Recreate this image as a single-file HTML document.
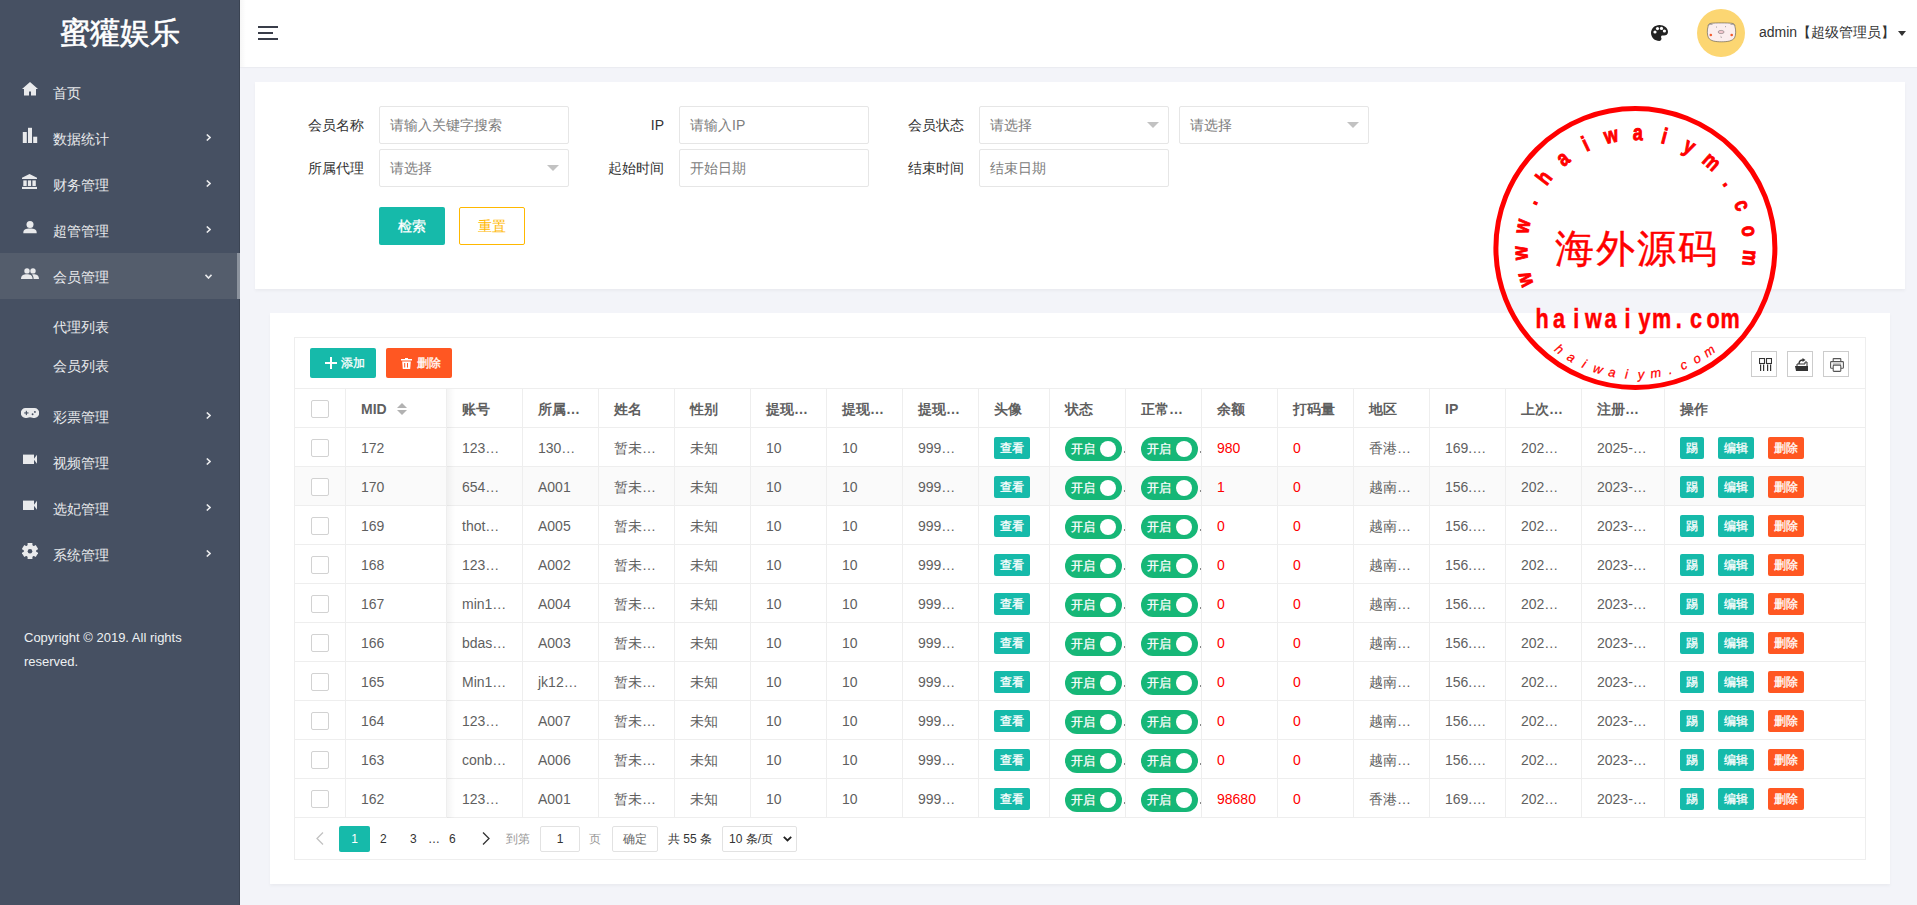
<!DOCTYPE html><html><head><meta charset="utf-8"><title>admin</title><style>
*{margin:0;padding:0;box-sizing:border-box}
html,body{width:1917px;height:905px;overflow:hidden}
body{position:relative;background:#f3f4f9;font-family:"Liberation Sans",sans-serif;font-size:14px;color:#333}
.abs{position:absolute}
.side{position:absolute;left:0;top:0;width:240px;height:905px;background:#465062}
.side .edge{position:absolute;left:239px;top:0;width:1px;height:905px;background:#3b4453}
.logo{position:absolute;left:0;top:12px;width:240px;text-align:center;color:#fff;font-size:30px;line-height:42px;-webkit-text-stroke:0.6px #fff}
.mi{position:absolute;left:0;width:240px;height:46px;color:#e9eaec;font-size:14px}
.mi .t{position:absolute;left:53px;top:1px;line-height:46px}
.mi svg{position:absolute}
.mi .ar{position:absolute;left:206px;top:19px}
.mi.act{background:#545d6c}
.mi.act .bar{position:absolute;right:0;top:0;width:3px;height:46px;background:#8c939e}
.copy{position:absolute;left:24px;top:626px;color:#eef0f2;font-size:13px;line-height:24px}
.hdr{position:absolute;left:240px;top:0;width:1677px;height:67px;background:#fff;box-shadow:0 1px 1px rgba(0,0,0,.03)}
.card{position:absolute;background:#fff;box-shadow:0 2px 3px rgba(0,0,0,.04)}
.lbl{position:absolute;width:110px;text-align:right;padding-right:15px;line-height:38px;color:#333;font-size:14px}
.inp{position:absolute;width:190px;height:38px;border:1px solid #e6e6e6;border-radius:2px;background:#fff;color:#7d7d7d;padding-left:10px;line-height:36px;font-size:14px}
.inp .edge{position:absolute;right:9px;top:15px;width:0;height:0;border-left:6px solid transparent;border-right:6px solid transparent;border-top:6px solid #c2c2c2}
.btn{position:absolute;height:38px;line-height:38px;text-align:center;border-radius:2px;font-size:14px;color:#fff;-webkit-text-stroke-width:0.3px}
.tbox{position:absolute;left:294px;top:337px;width:1572px;height:523px;border:1px solid #eee;background:#fff}
.row{position:absolute;left:0;width:1570px;height:39px;border-bottom:1px solid #eee}
.cell{position:absolute;top:0;height:38px;border-left:1px solid #eee;line-height:40px;padding-left:15px;color:#5f5f5f;font-size:14px;white-space:nowrap;overflow:hidden}
.hrow .cell{font-weight:bold}
.cb{position:absolute;width:18px;height:18px;border:1px solid #d2d2d2;border-radius:2px;background:#fff}
.xs{position:absolute;top:9px;height:22px;line-height:22px;border-radius:2px;color:#fff;font-size:12px;text-align:center;-webkit-text-stroke:0.3px #fff}
.sw{position:absolute;top:9px;width:57px;height:24px;border-radius:12px;background:#16b777;color:#fff;font-size:12px;line-height:24px}
.sw span{position:absolute;left:6px;top:0;-webkit-text-stroke:0.3px #fff}
.sw i{position:absolute;right:6px;top:4px;width:16px;height:16px;border-radius:50%;background:#fff}
.red{color:#ff0000 !important}
.tool{position:absolute;width:26px;height:26px;border:1px solid #ccc;top:13px}
.pg{position:absolute;top:8px;height:26px;line-height:26px;font-size:12px;color:#333}
</style></head><body><div class="side"><div class="edge"></div><div class="logo">蜜獾娱乐</div><div class="mi" style="top:69px"><svg style="left:22px;top:13px" width="16" height="14" viewBox="0 0 16 14"><path d="M8 0 L16 7 L14 7 L14 13.5 L9 13.5 L9 9.5 L7 9.5 L7 13.5 L2 13.5 L2 7 L0 7 Z" fill="#e9eaec"/></svg><span class="t">首页</span></div><div class="mi" style="top:115px"><svg style="left:22px;top:12px" width="16" height="16" viewBox="0 0 16 16"><rect x="0.8" y="5" width="4" height="11" fill="#e9eaec"/><rect x="6" y="0.8" width="4" height="15.2" fill="#e9eaec"/><rect x="11.2" y="9.7" width="4" height="6.3" fill="#e9eaec"/></svg><span class="t">数据统计</span><svg class="ar" width="5" height="7" viewBox="0 0 5 7"><path d="M0.8 0.5 L4 3.5 L0.8 6.5" stroke="#e9eaec" stroke-width="1.6" fill="none"/></svg></div><div class="mi" style="top:161px"><svg style="left:22px;top:12px" width="16" height="16" viewBox="0 0 16 16"><path d="M7.5 1 L15 4.8 L15 6.1 L0 6.1 L0 4.8 Z" fill="#e9eaec"/><rect x="1.3" y="7.4" width="3.4" height="5.6" fill="#e9eaec"/><rect x="5.9" y="7.4" width="3.2" height="5.6" fill="#e9eaec"/><rect x="10.4" y="7.4" width="3.4" height="5.6" fill="#e9eaec"/><rect x="0" y="13.9" width="15" height="3" fill="#e9eaec"/></svg><span class="t">财务管理</span><svg class="ar" width="5" height="7" viewBox="0 0 5 7"><path d="M0.8 0.5 L4 3.5 L0.8 6.5" stroke="#e9eaec" stroke-width="1.6" fill="none"/></svg></div><div class="mi" style="top:207px"><svg style="left:23px;top:14px" width="14" height="13" viewBox="0 0 14 13"><circle cx="7" cy="3.6" r="3.5" fill="#e9eaec"/><path d="M0.3 12.2 C0.3 8.6 2.5 7.6 7 7.6 C11.5 7.6 13.7 8.6 13.7 12.2 Z" fill="#e9eaec"/></svg><span class="t">超管管理</span><svg class="ar" width="5" height="7" viewBox="0 0 5 7"><path d="M0.8 0.5 L4 3.5 L0.8 6.5" stroke="#e9eaec" stroke-width="1.6" fill="none"/></svg></div><div class="mi act" style="top:253px"><svg style="left:21px;top:15px" width="18" height="11" viewBox="0 0 18 11"><circle cx="6" cy="2.9" r="2.7" fill="#e9eaec"/><circle cx="12" cy="2.9" r="2.7" fill="#e9eaec"/><path d="M0 11 C0 7.3 2.5 6.3 6 6.3 C9 6.3 11.3 7 11.6 11 Z" fill="#e9eaec"/><path d="M11 6.5 C11.5 6.3 12 6.3 12.5 6.3 C15.5 6.3 18 7.3 18 11 L12.6 11 C12.5 9 12.2 7.6 11 6.5 Z" fill="#e9eaec"/></svg><span class="t">会员管理</span><svg class="ar" style="left:205px;top:21px" width="7" height="5" viewBox="0 0 7 5"><path d="M0.5 0.8 L3.5 4 L6.5 0.8" stroke="#e9eaec" stroke-width="1.6" fill="none"/></svg><div class="bar"></div></div><div class="mi" style="top:393px"><svg style="left:21px;top:15px" width="18" height="10" viewBox="0 0 18 10"><path d="M4.5 0 L13.5 0 A4.5 4.8 0 0 1 13.5 10 C11.8 10 11 9.2 9 9.2 C7 9.2 6.2 10 4.5 10 A4.5 4.8 0 0 1 4.5 0 Z" fill="#e9eaec"/><rect x="3.2" y="4.4" width="4.3" height="1.1" fill="#465062"/><rect x="4.8" y="2.8" width="1.1" height="4.3" fill="#465062"/><circle cx="11.6" cy="6.3" r="0.95" fill="#465062"/><circle cx="13.9" cy="3.9" r="0.95" fill="#465062"/></svg><span class="t">彩票管理</span><svg class="ar" width="5" height="7" viewBox="0 0 5 7"><path d="M0.8 0.5 L4 3.5 L0.8 6.5" stroke="#e9eaec" stroke-width="1.6" fill="none"/></svg></div><div class="mi" style="top:439px"><svg style="left:23px;top:15px" width="15" height="11" viewBox="0 0 15 11"><rect x="0" y="0.6" width="11" height="9.4" fill="#e9eaec"/><path d="M10.6 5.3 L14 0.8 L14 9.8 Z" fill="#e9eaec"/></svg><span class="t">视频管理</span><svg class="ar" width="5" height="7" viewBox="0 0 5 7"><path d="M0.8 0.5 L4 3.5 L0.8 6.5" stroke="#e9eaec" stroke-width="1.6" fill="none"/></svg></div><div class="mi" style="top:485px"><svg style="left:23px;top:15px" width="15" height="11" viewBox="0 0 15 11"><rect x="0" y="0.6" width="11" height="9.4" fill="#e9eaec"/><path d="M10.6 5.3 L14 0.8 L14 9.8 Z" fill="#e9eaec"/></svg><span class="t">选妃管理</span><svg class="ar" width="5" height="7" viewBox="0 0 5 7"><path d="M0.8 0.5 L4 3.5 L0.8 6.5" stroke="#e9eaec" stroke-width="1.6" fill="none"/></svg></div><div class="mi" style="top:531px"><svg style="left:22px;top:12px" width="16" height="16" viewBox="0 0 16 16"><rect x="5.6" y="0" width="4.8" height="16" fill="#e9eaec" transform="rotate(0 8 8)"/><rect x="5.6" y="0" width="4.8" height="16" fill="#e9eaec" transform="rotate(60 8 8)"/><rect x="5.6" y="0" width="4.8" height="16" fill="#e9eaec" transform="rotate(120 8 8)"/><circle cx="8" cy="8" r="6.2" fill="#e9eaec"/><circle cx="8" cy="8.3" r="2.3" fill="#465062"/></svg><span class="t">系统管理</span><svg class="ar" width="5" height="7" viewBox="0 0 5 7"><path d="M0.8 0.5 L4 3.5 L0.8 6.5" stroke="#e9eaec" stroke-width="1.6" fill="none"/></svg></div><div class="mi" style="top:307px;height:39px"><span class="t" style="line-height:39px">代理列表</span></div><div class="mi" style="top:346px;height:39px"><span class="t" style="line-height:39px">会员列表</span></div><div class="copy">Copyright © 2019. All rights<br>reserved.</div></div><div class="hdr"><div class="abs" style="left:0;top:0;width:6px;height:67px;background:linear-gradient(to right,rgba(0,0,0,.035),rgba(0,0,0,0))"></div><svg class="abs" style="left:18px;top:26px" width="20" height="14" viewBox="0 0 20 14"><rect x="0" y="0" width="20" height="2" fill="#393d49"/><rect x="0" y="6" width="15" height="2" fill="#393d49"/><rect x="0" y="12" width="20" height="2" fill="#393d49"/></svg><svg class="abs" style="left:1411px;top:25px" width="17" height="16" viewBox="0 0 17 16"><path d="M8.5 0 C13.2 0 17 3.1 17 7 C17 9.5 15 10.5 13 10.5 L11.5 10.5 C10.5 10.5 10 11.2 10 12 C10 12.6 10.5 13 10.5 13.8 C10.5 15 9.5 16 8.3 16 C3.8 16 0 12.4 0 8 C0 3.6 3.8 0 8.5 0 Z" fill="#222"/><circle cx="4" cy="7" r="1.6" fill="#fff"/><circle cx="6.5" cy="3.6" r="1.6" fill="#fff"/><circle cx="10.5" cy="3.4" r="1.6" fill="#fff"/><circle cx="13.4" cy="6" r="1.6" fill="#fff"/></svg><svg class="abs" style="left:1457px;top:9px" width="48" height="48" viewBox="0 0 48 48"><circle cx="24" cy="24" r="24" fill="#fcd672"/><path d="M14 14.3 C18 13.8 31 13.8 35 14.3 C37.2 14.6 38 15.8 37.9 17.5 C39 20.5 39 26 37.5 28.8 C35.5 32 30.5 32.8 24.5 32.8 C18.5 32.8 13.5 32 11.5 28.8 C10 26 10 20.5 11.1 17.5 C11 15.8 11.8 14.6 14 14.3 Z" fill="#fbeeee" stroke="#444" stroke-width="0.55"/><path d="M11.5 16.5 Q12.5 14.6 15.5 15.4" fill="none" stroke="#555" stroke-width="0.5"/><path d="M37.5 16.5 Q36.5 14.6 33.5 15.4" fill="none" stroke="#555" stroke-width="0.5"/><ellipse cx="24.1" cy="23" rx="3" ry="1.6" fill="#f4c9cf" stroke="#555" stroke-width="0.45"/><circle cx="13.8" cy="26" r="1.3" fill="#f25a2c"/><circle cx="34.7" cy="26" r="1.3" fill="#f25a2c"/><circle cx="19.6" cy="18" r="0.45" fill="#555"/><circle cx="28.6" cy="17.8" r="0.45" fill="#555"/><path d="M23.6 27.3 Q24.6 27.6 24.2 28.8" fill="none" stroke="#555" stroke-width="0.5"/></svg><div class="abs" style="left:1519px;top:22px;font-size:14px;line-height:20px;color:#333;white-space:nowrap">admin【超级管理员】</div><div class="abs" style="left:1658px;top:31px;width:0;height:0;border-left:4px solid transparent;border-right:4px solid transparent;border-top:5px solid #333"></div></div><div class="card" style="left:255px;top:82px;width:1650px;height:207px"></div><div class="lbl" style="left:269px;top:106px">会员名称</div><div class="inp" style="left:379px;top:106px">请输入关键字搜索</div><div class="lbl" style="left:569px;top:106px">IP</div><div class="inp" style="left:679px;top:106px">请输入IP</div><div class="lbl" style="left:869px;top:106px">会员状态</div><div class="inp" style="left:979px;top:106px">请选择<i class="edge"></i></div><div class="inp" style="left:1179px;top:106px">请选择<i class="edge"></i></div><div class="lbl" style="left:269px;top:149px">所属代理</div><div class="inp" style="left:379px;top:149px">请选择<i class="edge"></i></div><div class="lbl" style="left:569px;top:149px">起始时间</div><div class="inp" style="left:679px;top:149px">开始日期</div><div class="lbl" style="left:869px;top:149px">结束时间</div><div class="inp" style="left:979px;top:149px">结束日期</div><div class="btn" style="left:379px;top:207px;width:66px;background:#16baaa">检索</div><div class="btn" style="left:459px;top:207px;width:66px;border:1px solid #ffb800;color:#ffb800;line-height:36px;background:#fff;-webkit-text-stroke-width:0">重置</div><div class="card" style="left:270px;top:313px;width:1620px;height:571px"></div><div class="tbox"><div class="btn" style="left:15px;top:10px;width:66px;height:30px;line-height:30px;font-size:12px;background:#16baaa"><svg style="position:absolute;left:15px;top:9px" width="12" height="12" viewBox="0 0 12 12"><rect x="5" y="0" width="2" height="12" fill="#fff"/><rect x="0" y="5" width="12" height="2" fill="#fff"/></svg><span style="position:absolute;left:31px;top:0">添加</span></div><div class="btn" style="left:91px;top:10px;width:66px;height:30px;line-height:30px;font-size:12px;background:#ff5722"><svg style="position:absolute;left:15px;top:10px" width="11" height="11" viewBox="0 0 11 11"><rect x="0" y="1" width="11" height="1.5" fill="#fff"/><rect x="4" y="0" width="3" height="1.5" fill="#fff"/><path d="M1.2 3.5 L9.8 3.5 L9.2 11 L1.8 11 Z" fill="#fff"/><rect x="3.2" y="5" width="1" height="4.5" fill="#ff5722"/><rect x="6.0" y="5" width="1" height="4.5" fill="#ff5722"/></svg><span style="position:absolute;left:31px;top:0">删除</span></div><div class="tool" style="left:1456px"><svg style="position:absolute;left:7px;top:6px" width="13" height="14" viewBox="0 0 13 14"><rect x="0.5" y="0.5" width="5" height="5" fill="none" stroke="#333" stroke-width="1.1"/><rect x="7.5" y="0.5" width="5" height="5" fill="none" stroke="#333" stroke-width="1.1"/><rect x="1" y="6.5" width="1.2" height="6.5" fill="#333"/><rect x="4" y="6.5" width="1.2" height="6.5" fill="#333"/><rect x="8" y="6.5" width="1.2" height="6.5" fill="#333"/><rect x="11" y="6.5" width="1.2" height="6.5" fill="#333"/></svg></div><div class="tool" style="left:1492px"><svg style="position:absolute;left:7px;top:6px" width="13" height="13" viewBox="0 0 13 13"><path d="M0 8 L13 8 L13 13 L1 13 Z" fill="#333"/><path d="M2 8 L2 6 L10 6 L10 4 L12 4 L12 8" fill="none" stroke="#333" stroke-width="1"/><path d="M4 6 C4 3 5.5 2 8 2" fill="none" stroke="#333" stroke-width="1.4"/><path d="M7.5 0 L10.5 2 L7.5 4 Z" fill="#333"/></svg></div><div class="tool" style="left:1528px"><svg style="position:absolute;left:6px;top:6px" width="14" height="14" viewBox="0 0 14 14"><path d="M3.2 3.5 L3.2 1.2 Q3.2 0.6 3.8 0.6 L10.2 0.6 Q10.8 0.6 10.8 1.2 L10.8 3.5" fill="none" stroke="#555" stroke-width="1.1"/><path d="M3 10.2 L1.4 10.2 Q0.6 10.2 0.6 9.4 L0.6 4.4 Q0.6 3.6 1.4 3.6 L12.6 3.6 Q13.4 3.6 13.4 4.4 L13.4 9.4 Q13.4 10.2 12.6 10.2 L11 10.2" fill="none" stroke="#555" stroke-width="1.1"/><rect x="3.2" y="7.3" width="7.6" height="6.1" rx="0.8" fill="none" stroke="#555" stroke-width="1.1"/><rect x="2.8" y="5.6" width="8.4" height="1" fill="#777"/></svg></div><div class="row hrow" style="top:51px;background:#fff"><div class="cell" style="left:0px;width:50px;border-left:none;"><i class="cb" style="left:16px;top:11px"></i></div><div class="cell" style="left:50px;width:101px;">MID<svg style="position:absolute;left:51px;top:14px" width="10" height="12" viewBox="0 0 10 12"><path d="M5 0 L10 5 L0 5 Z" fill="#b2b2b2"/><path d="M0 7 L10 7 L5 12 Z" fill="#b2b2b2"/></svg></div><div class="cell" style="left:151px;width:76px;">账号</div><div class="cell" style="left:227px;width:76px;">所属…</div><div class="cell" style="left:303px;width:76px;">姓名</div><div class="cell" style="left:379px;width:76px;">性别</div><div class="cell" style="left:455px;width:76px;">提现…</div><div class="cell" style="left:531px;width:76px;">提现…</div><div class="cell" style="left:607px;width:76px;">提现…</div><div class="cell" style="left:683px;width:71px;">头像</div><div class="cell" style="left:754px;width:76px;">状态</div><div class="cell" style="left:830px;width:76px;">正常…</div><div class="cell" style="left:906px;width:76px;">余额</div><div class="cell" style="left:982px;width:76px;">打码量</div><div class="cell" style="left:1058px;width:76px;">地区</div><div class="cell" style="left:1134px;width:76px;">IP</div><div class="cell" style="left:1210px;width:76px;">上次…</div><div class="cell" style="left:1286px;width:83px;">注册…</div><div class="cell" style="left:1369px;width:201px;">操作</div></div><div class="abs" style="left:0;top:50px;width:1570px;height:1px;background:#eee"></div><div class="row" style="top:90px;background:#fff"><div class="cell" style="left:0px;width:50px;border-left:none;"><i class="cb" style="left:16px;top:11px"></i></div><div class="cell" style="left:50px;width:101px;">172</div><div class="cell" style="left:151px;width:76px;">123…</div><div class="cell" style="left:227px;width:76px;">130…</div><div class="cell" style="left:303px;width:76px;">暂未…</div><div class="cell" style="left:379px;width:76px;">未知</div><div class="cell" style="left:455px;width:76px;">10</div><div class="cell" style="left:531px;width:76px;">10</div><div class="cell" style="left:607px;width:76px;">999…</div><div class="cell" style="left:683px;width:71px;"><div class="xs" style="left:15px;width:36px;background:#16baaa">查看</div></div><div class="cell" style="left:754px;width:76px;"><div class="sw" style="left:15px"><span>开启</span><i></i></div><i style="position:absolute;left:74px;top:23px;width:2px;height:2px;background:#888"></i></div><div class="cell" style="left:830px;width:76px;"><div class="sw" style="left:15px"><span>开启</span><i></i></div><i style="position:absolute;left:74px;top:23px;width:2px;height:2px;background:#888"></i></div><div class="cell" style="left:906px;width:76px;"><span class="red">980</span></div><div class="cell" style="left:982px;width:76px;"><span class="red">0</span></div><div class="cell" style="left:1058px;width:76px;">香港…</div><div class="cell" style="left:1134px;width:76px;">169.…</div><div class="cell" style="left:1210px;width:76px;">202…</div><div class="cell" style="left:1286px;width:83px;">2025-…</div><div class="cell" style="left:1369px;width:201px;"><div class="xs" style="left:15px;width:24px;background:#16baaa">踢</div><div class="xs" style="left:53px;width:36px;background:#16baaa">编辑</div><div class="xs" style="left:103px;width:36px;background:#ff5722">删除</div></div></div><div class="row" style="top:129px;background:#fafafa"><div class="cell" style="left:0px;width:50px;border-left:none;"><i class="cb" style="left:16px;top:11px"></i></div><div class="cell" style="left:50px;width:101px;">170</div><div class="cell" style="left:151px;width:76px;">654…</div><div class="cell" style="left:227px;width:76px;">A001</div><div class="cell" style="left:303px;width:76px;">暂未…</div><div class="cell" style="left:379px;width:76px;">未知</div><div class="cell" style="left:455px;width:76px;">10</div><div class="cell" style="left:531px;width:76px;">10</div><div class="cell" style="left:607px;width:76px;">999…</div><div class="cell" style="left:683px;width:71px;"><div class="xs" style="left:15px;width:36px;background:#16baaa">查看</div></div><div class="cell" style="left:754px;width:76px;"><div class="sw" style="left:15px"><span>开启</span><i></i></div><i style="position:absolute;left:74px;top:23px;width:2px;height:2px;background:#888"></i></div><div class="cell" style="left:830px;width:76px;"><div class="sw" style="left:15px"><span>开启</span><i></i></div><i style="position:absolute;left:74px;top:23px;width:2px;height:2px;background:#888"></i></div><div class="cell" style="left:906px;width:76px;"><span class="red">1</span></div><div class="cell" style="left:982px;width:76px;"><span class="red">0</span></div><div class="cell" style="left:1058px;width:76px;">越南…</div><div class="cell" style="left:1134px;width:76px;">156.…</div><div class="cell" style="left:1210px;width:76px;">202…</div><div class="cell" style="left:1286px;width:83px;">2023-…</div><div class="cell" style="left:1369px;width:201px;"><div class="xs" style="left:15px;width:24px;background:#16baaa">踢</div><div class="xs" style="left:53px;width:36px;background:#16baaa">编辑</div><div class="xs" style="left:103px;width:36px;background:#ff5722">删除</div></div></div><div class="row" style="top:168px;background:#fff"><div class="cell" style="left:0px;width:50px;border-left:none;"><i class="cb" style="left:16px;top:11px"></i></div><div class="cell" style="left:50px;width:101px;">169</div><div class="cell" style="left:151px;width:76px;">thot…</div><div class="cell" style="left:227px;width:76px;">A005</div><div class="cell" style="left:303px;width:76px;">暂未…</div><div class="cell" style="left:379px;width:76px;">未知</div><div class="cell" style="left:455px;width:76px;">10</div><div class="cell" style="left:531px;width:76px;">10</div><div class="cell" style="left:607px;width:76px;">999…</div><div class="cell" style="left:683px;width:71px;"><div class="xs" style="left:15px;width:36px;background:#16baaa">查看</div></div><div class="cell" style="left:754px;width:76px;"><div class="sw" style="left:15px"><span>开启</span><i></i></div><i style="position:absolute;left:74px;top:23px;width:2px;height:2px;background:#888"></i></div><div class="cell" style="left:830px;width:76px;"><div class="sw" style="left:15px"><span>开启</span><i></i></div><i style="position:absolute;left:74px;top:23px;width:2px;height:2px;background:#888"></i></div><div class="cell" style="left:906px;width:76px;"><span class="red">0</span></div><div class="cell" style="left:982px;width:76px;"><span class="red">0</span></div><div class="cell" style="left:1058px;width:76px;">越南…</div><div class="cell" style="left:1134px;width:76px;">156.…</div><div class="cell" style="left:1210px;width:76px;">202…</div><div class="cell" style="left:1286px;width:83px;">2023-…</div><div class="cell" style="left:1369px;width:201px;"><div class="xs" style="left:15px;width:24px;background:#16baaa">踢</div><div class="xs" style="left:53px;width:36px;background:#16baaa">编辑</div><div class="xs" style="left:103px;width:36px;background:#ff5722">删除</div></div></div><div class="row" style="top:207px;background:#fff"><div class="cell" style="left:0px;width:50px;border-left:none;"><i class="cb" style="left:16px;top:11px"></i></div><div class="cell" style="left:50px;width:101px;">168</div><div class="cell" style="left:151px;width:76px;">123…</div><div class="cell" style="left:227px;width:76px;">A002</div><div class="cell" style="left:303px;width:76px;">暂未…</div><div class="cell" style="left:379px;width:76px;">未知</div><div class="cell" style="left:455px;width:76px;">10</div><div class="cell" style="left:531px;width:76px;">10</div><div class="cell" style="left:607px;width:76px;">999…</div><div class="cell" style="left:683px;width:71px;"><div class="xs" style="left:15px;width:36px;background:#16baaa">查看</div></div><div class="cell" style="left:754px;width:76px;"><div class="sw" style="left:15px"><span>开启</span><i></i></div><i style="position:absolute;left:74px;top:23px;width:2px;height:2px;background:#888"></i></div><div class="cell" style="left:830px;width:76px;"><div class="sw" style="left:15px"><span>开启</span><i></i></div><i style="position:absolute;left:74px;top:23px;width:2px;height:2px;background:#888"></i></div><div class="cell" style="left:906px;width:76px;"><span class="red">0</span></div><div class="cell" style="left:982px;width:76px;"><span class="red">0</span></div><div class="cell" style="left:1058px;width:76px;">越南…</div><div class="cell" style="left:1134px;width:76px;">156.…</div><div class="cell" style="left:1210px;width:76px;">202…</div><div class="cell" style="left:1286px;width:83px;">2023-…</div><div class="cell" style="left:1369px;width:201px;"><div class="xs" style="left:15px;width:24px;background:#16baaa">踢</div><div class="xs" style="left:53px;width:36px;background:#16baaa">编辑</div><div class="xs" style="left:103px;width:36px;background:#ff5722">删除</div></div></div><div class="row" style="top:246px;background:#fff"><div class="cell" style="left:0px;width:50px;border-left:none;"><i class="cb" style="left:16px;top:11px"></i></div><div class="cell" style="left:50px;width:101px;">167</div><div class="cell" style="left:151px;width:76px;">min1…</div><div class="cell" style="left:227px;width:76px;">A004</div><div class="cell" style="left:303px;width:76px;">暂未…</div><div class="cell" style="left:379px;width:76px;">未知</div><div class="cell" style="left:455px;width:76px;">10</div><div class="cell" style="left:531px;width:76px;">10</div><div class="cell" style="left:607px;width:76px;">999…</div><div class="cell" style="left:683px;width:71px;"><div class="xs" style="left:15px;width:36px;background:#16baaa">查看</div></div><div class="cell" style="left:754px;width:76px;"><div class="sw" style="left:15px"><span>开启</span><i></i></div><i style="position:absolute;left:74px;top:23px;width:2px;height:2px;background:#888"></i></div><div class="cell" style="left:830px;width:76px;"><div class="sw" style="left:15px"><span>开启</span><i></i></div><i style="position:absolute;left:74px;top:23px;width:2px;height:2px;background:#888"></i></div><div class="cell" style="left:906px;width:76px;"><span class="red">0</span></div><div class="cell" style="left:982px;width:76px;"><span class="red">0</span></div><div class="cell" style="left:1058px;width:76px;">越南…</div><div class="cell" style="left:1134px;width:76px;">156.…</div><div class="cell" style="left:1210px;width:76px;">202…</div><div class="cell" style="left:1286px;width:83px;">2023-…</div><div class="cell" style="left:1369px;width:201px;"><div class="xs" style="left:15px;width:24px;background:#16baaa">踢</div><div class="xs" style="left:53px;width:36px;background:#16baaa">编辑</div><div class="xs" style="left:103px;width:36px;background:#ff5722">删除</div></div></div><div class="row" style="top:285px;background:#fff"><div class="cell" style="left:0px;width:50px;border-left:none;"><i class="cb" style="left:16px;top:11px"></i></div><div class="cell" style="left:50px;width:101px;">166</div><div class="cell" style="left:151px;width:76px;">bdas…</div><div class="cell" style="left:227px;width:76px;">A003</div><div class="cell" style="left:303px;width:76px;">暂未…</div><div class="cell" style="left:379px;width:76px;">未知</div><div class="cell" style="left:455px;width:76px;">10</div><div class="cell" style="left:531px;width:76px;">10</div><div class="cell" style="left:607px;width:76px;">999…</div><div class="cell" style="left:683px;width:71px;"><div class="xs" style="left:15px;width:36px;background:#16baaa">查看</div></div><div class="cell" style="left:754px;width:76px;"><div class="sw" style="left:15px"><span>开启</span><i></i></div><i style="position:absolute;left:74px;top:23px;width:2px;height:2px;background:#888"></i></div><div class="cell" style="left:830px;width:76px;"><div class="sw" style="left:15px"><span>开启</span><i></i></div><i style="position:absolute;left:74px;top:23px;width:2px;height:2px;background:#888"></i></div><div class="cell" style="left:906px;width:76px;"><span class="red">0</span></div><div class="cell" style="left:982px;width:76px;"><span class="red">0</span></div><div class="cell" style="left:1058px;width:76px;">越南…</div><div class="cell" style="left:1134px;width:76px;">156.…</div><div class="cell" style="left:1210px;width:76px;">202…</div><div class="cell" style="left:1286px;width:83px;">2023-…</div><div class="cell" style="left:1369px;width:201px;"><div class="xs" style="left:15px;width:24px;background:#16baaa">踢</div><div class="xs" style="left:53px;width:36px;background:#16baaa">编辑</div><div class="xs" style="left:103px;width:36px;background:#ff5722">删除</div></div></div><div class="row" style="top:324px;background:#fff"><div class="cell" style="left:0px;width:50px;border-left:none;"><i class="cb" style="left:16px;top:11px"></i></div><div class="cell" style="left:50px;width:101px;">165</div><div class="cell" style="left:151px;width:76px;">Min1…</div><div class="cell" style="left:227px;width:76px;">jk12…</div><div class="cell" style="left:303px;width:76px;">暂未…</div><div class="cell" style="left:379px;width:76px;">未知</div><div class="cell" style="left:455px;width:76px;">10</div><div class="cell" style="left:531px;width:76px;">10</div><div class="cell" style="left:607px;width:76px;">999…</div><div class="cell" style="left:683px;width:71px;"><div class="xs" style="left:15px;width:36px;background:#16baaa">查看</div></div><div class="cell" style="left:754px;width:76px;"><div class="sw" style="left:15px"><span>开启</span><i></i></div><i style="position:absolute;left:74px;top:23px;width:2px;height:2px;background:#888"></i></div><div class="cell" style="left:830px;width:76px;"><div class="sw" style="left:15px"><span>开启</span><i></i></div><i style="position:absolute;left:74px;top:23px;width:2px;height:2px;background:#888"></i></div><div class="cell" style="left:906px;width:76px;"><span class="red">0</span></div><div class="cell" style="left:982px;width:76px;"><span class="red">0</span></div><div class="cell" style="left:1058px;width:76px;">越南…</div><div class="cell" style="left:1134px;width:76px;">156.…</div><div class="cell" style="left:1210px;width:76px;">202…</div><div class="cell" style="left:1286px;width:83px;">2023-…</div><div class="cell" style="left:1369px;width:201px;"><div class="xs" style="left:15px;width:24px;background:#16baaa">踢</div><div class="xs" style="left:53px;width:36px;background:#16baaa">编辑</div><div class="xs" style="left:103px;width:36px;background:#ff5722">删除</div></div></div><div class="row" style="top:363px;background:#fff"><div class="cell" style="left:0px;width:50px;border-left:none;"><i class="cb" style="left:16px;top:11px"></i></div><div class="cell" style="left:50px;width:101px;">164</div><div class="cell" style="left:151px;width:76px;">123…</div><div class="cell" style="left:227px;width:76px;">A007</div><div class="cell" style="left:303px;width:76px;">暂未…</div><div class="cell" style="left:379px;width:76px;">未知</div><div class="cell" style="left:455px;width:76px;">10</div><div class="cell" style="left:531px;width:76px;">10</div><div class="cell" style="left:607px;width:76px;">999…</div><div class="cell" style="left:683px;width:71px;"><div class="xs" style="left:15px;width:36px;background:#16baaa">查看</div></div><div class="cell" style="left:754px;width:76px;"><div class="sw" style="left:15px"><span>开启</span><i></i></div><i style="position:absolute;left:74px;top:23px;width:2px;height:2px;background:#888"></i></div><div class="cell" style="left:830px;width:76px;"><div class="sw" style="left:15px"><span>开启</span><i></i></div><i style="position:absolute;left:74px;top:23px;width:2px;height:2px;background:#888"></i></div><div class="cell" style="left:906px;width:76px;"><span class="red">0</span></div><div class="cell" style="left:982px;width:76px;"><span class="red">0</span></div><div class="cell" style="left:1058px;width:76px;">越南…</div><div class="cell" style="left:1134px;width:76px;">156.…</div><div class="cell" style="left:1210px;width:76px;">202…</div><div class="cell" style="left:1286px;width:83px;">2023-…</div><div class="cell" style="left:1369px;width:201px;"><div class="xs" style="left:15px;width:24px;background:#16baaa">踢</div><div class="xs" style="left:53px;width:36px;background:#16baaa">编辑</div><div class="xs" style="left:103px;width:36px;background:#ff5722">删除</div></div></div><div class="row" style="top:402px;background:#fff"><div class="cell" style="left:0px;width:50px;border-left:none;"><i class="cb" style="left:16px;top:11px"></i></div><div class="cell" style="left:50px;width:101px;">163</div><div class="cell" style="left:151px;width:76px;">conb…</div><div class="cell" style="left:227px;width:76px;">A006</div><div class="cell" style="left:303px;width:76px;">暂未…</div><div class="cell" style="left:379px;width:76px;">未知</div><div class="cell" style="left:455px;width:76px;">10</div><div class="cell" style="left:531px;width:76px;">10</div><div class="cell" style="left:607px;width:76px;">999…</div><div class="cell" style="left:683px;width:71px;"><div class="xs" style="left:15px;width:36px;background:#16baaa">查看</div></div><div class="cell" style="left:754px;width:76px;"><div class="sw" style="left:15px"><span>开启</span><i></i></div><i style="position:absolute;left:74px;top:23px;width:2px;height:2px;background:#888"></i></div><div class="cell" style="left:830px;width:76px;"><div class="sw" style="left:15px"><span>开启</span><i></i></div><i style="position:absolute;left:74px;top:23px;width:2px;height:2px;background:#888"></i></div><div class="cell" style="left:906px;width:76px;"><span class="red">0</span></div><div class="cell" style="left:982px;width:76px;"><span class="red">0</span></div><div class="cell" style="left:1058px;width:76px;">越南…</div><div class="cell" style="left:1134px;width:76px;">156.…</div><div class="cell" style="left:1210px;width:76px;">202…</div><div class="cell" style="left:1286px;width:83px;">2023-…</div><div class="cell" style="left:1369px;width:201px;"><div class="xs" style="left:15px;width:24px;background:#16baaa">踢</div><div class="xs" style="left:53px;width:36px;background:#16baaa">编辑</div><div class="xs" style="left:103px;width:36px;background:#ff5722">删除</div></div></div><div class="row" style="top:441px;background:#fff"><div class="cell" style="left:0px;width:50px;border-left:none;"><i class="cb" style="left:16px;top:11px"></i></div><div class="cell" style="left:50px;width:101px;">162</div><div class="cell" style="left:151px;width:76px;">123…</div><div class="cell" style="left:227px;width:76px;">A001</div><div class="cell" style="left:303px;width:76px;">暂未…</div><div class="cell" style="left:379px;width:76px;">未知</div><div class="cell" style="left:455px;width:76px;">10</div><div class="cell" style="left:531px;width:76px;">10</div><div class="cell" style="left:607px;width:76px;">999…</div><div class="cell" style="left:683px;width:71px;"><div class="xs" style="left:15px;width:36px;background:#16baaa">查看</div></div><div class="cell" style="left:754px;width:76px;"><div class="sw" style="left:15px"><span>开启</span><i></i></div><i style="position:absolute;left:74px;top:23px;width:2px;height:2px;background:#888"></i></div><div class="cell" style="left:830px;width:76px;"><div class="sw" style="left:15px"><span>开启</span><i></i></div><i style="position:absolute;left:74px;top:23px;width:2px;height:2px;background:#888"></i></div><div class="cell" style="left:906px;width:76px;"><span class="red">98680</span></div><div class="cell" style="left:982px;width:76px;"><span class="red">0</span></div><div class="cell" style="left:1058px;width:76px;">香港…</div><div class="cell" style="left:1134px;width:76px;">169.…</div><div class="cell" style="left:1210px;width:76px;">202…</div><div class="cell" style="left:1286px;width:83px;">2023-…</div><div class="cell" style="left:1369px;width:201px;"><div class="xs" style="left:15px;width:24px;background:#16baaa">踢</div><div class="xs" style="left:53px;width:36px;background:#16baaa">编辑</div><div class="xs" style="left:103px;width:36px;background:#ff5722">删除</div></div></div><div class="abs" style="left:152px;top:51px;width:8px;height:429px;background:linear-gradient(to right,rgba(0,0,0,.045),rgba(0,0,0,0))"></div><div class="abs" style="left:0;top:480px;width:1570px;height:41px"><svg class="abs" style="left:21px;top:14px" width="8" height="13" viewBox="0 0 8 13"><path d="M7 0.5 L1 6.5 L7 12.5" fill="none" stroke="#c2c2c2" stroke-width="1.3"/></svg><div class="pg" style="left:44px;width:31px;background:#16baaa;color:#fff;text-align:center;border-radius:2px">1</div><div class="pg" style="left:85px">2</div><div class="pg" style="left:115px">3</div><div class="pg" style="left:133px">…</div><div class="pg" style="left:154px">6</div><svg class="abs" style="left:187px;top:14px" width="8" height="13" viewBox="0 0 8 13"><path d="M1 0.5 L7 6.5 L1 12.5" fill="none" stroke="#333" stroke-width="1.3"/></svg><div class="pg" style="left:211px;color:#999">到第</div><div class="pg" style="left:245px;width:40px;height:26px;border:1px solid #e2e2e2;border-radius:2px;text-align:center;line-height:24px">1</div><div class="pg" style="left:294px;color:#999">页</div><div class="pg" style="left:317px;width:46px;height:26px;border:1px solid #e2e2e2;border-radius:2px;text-align:center;line-height:24px;color:#666">确定</div><div class="pg" style="left:373px">共 55 条</div><div class="pg" style="left:427px;width:75px;height:26px;border:1px solid #e2e2e2;border-radius:2px;line-height:24px;padding-left:6px">10 条/页<svg style="position:absolute;left:60px;top:9px" width="9" height="6" viewBox="0 0 9 6"><path d="M0.8 0.8 L4.5 4.5 L8.2 0.8" fill="none" stroke="#222" stroke-width="1.8"/></svg></div></div></div><svg class="abs" style="left:0;top:0" width="1917" height="905" viewBox="0 0 1917 905"><circle cx="1635.4" cy="248.0" r="139.5" fill="none" stroke="#f00" stroke-width="5"/><g transform="rotate(-106.00 1635.4 248.0)"><text transform="translate(1635.4 140.0) scale(0.85 1.05)" text-anchor="middle" font-family="Liberation Sans" font-weight="bold" font-size="21" fill="#f00" stroke="#f00" stroke-width="0.9">w</text></g><g transform="rotate(-92.60 1635.4 248.0)"><text transform="translate(1635.4 140.0) scale(0.85 1.05)" text-anchor="middle" font-family="Liberation Sans" font-weight="bold" font-size="21" fill="#f00" stroke="#f00" stroke-width="0.9">w</text></g><g transform="rotate(-79.20 1635.4 248.0)"><text transform="translate(1635.4 140.0) scale(0.85 1.05)" text-anchor="middle" font-family="Liberation Sans" font-weight="bold" font-size="21" fill="#f00" stroke="#f00" stroke-width="0.9">w</text></g><g transform="rotate(-65.80 1635.4 248.0)"><text transform="translate(1635.4 140.0) scale(0.85 1.05)" text-anchor="middle" font-family="Liberation Sans" font-weight="bold" font-size="21" fill="#f00" stroke="#f00" stroke-width="0.9">.</text></g><g transform="rotate(-52.40 1635.4 248.0)"><text transform="translate(1635.4 140.0) scale(0.85 1.05)" text-anchor="middle" font-family="Liberation Sans" font-weight="bold" font-size="21" fill="#f00" stroke="#f00" stroke-width="0.9">h</text></g><g transform="rotate(-39.00 1635.4 248.0)"><text transform="translate(1635.4 140.0) scale(0.85 1.05)" text-anchor="middle" font-family="Liberation Sans" font-weight="bold" font-size="21" fill="#f00" stroke="#f00" stroke-width="0.9">a</text></g><g transform="rotate(-25.60 1635.4 248.0)"><text transform="translate(1635.4 140.0) scale(0.85 1.05)" text-anchor="middle" font-family="Liberation Sans" font-weight="bold" font-size="21" fill="#f00" stroke="#f00" stroke-width="0.9">i</text></g><g transform="rotate(-12.20 1635.4 248.0)"><text transform="translate(1635.4 140.0) scale(0.85 1.05)" text-anchor="middle" font-family="Liberation Sans" font-weight="bold" font-size="21" fill="#f00" stroke="#f00" stroke-width="0.9">w</text></g><g transform="rotate(1.20 1635.4 248.0)"><text transform="translate(1635.4 140.0) scale(0.85 1.05)" text-anchor="middle" font-family="Liberation Sans" font-weight="bold" font-size="21" fill="#f00" stroke="#f00" stroke-width="0.9">a</text></g><g transform="rotate(14.60 1635.4 248.0)"><text transform="translate(1635.4 140.0) scale(0.85 1.05)" text-anchor="middle" font-family="Liberation Sans" font-weight="bold" font-size="21" fill="#f00" stroke="#f00" stroke-width="0.9">i</text></g><g transform="rotate(28.00 1635.4 248.0)"><text transform="translate(1635.4 140.0) scale(0.85 1.05)" text-anchor="middle" font-family="Liberation Sans" font-weight="bold" font-size="21" fill="#f00" stroke="#f00" stroke-width="0.9">y</text></g><g transform="rotate(41.40 1635.4 248.0)"><text transform="translate(1635.4 140.0) scale(0.85 1.05)" text-anchor="middle" font-family="Liberation Sans" font-weight="bold" font-size="21" fill="#f00" stroke="#f00" stroke-width="0.9">m</text></g><g transform="rotate(54.80 1635.4 248.0)"><text transform="translate(1635.4 140.0) scale(0.85 1.05)" text-anchor="middle" font-family="Liberation Sans" font-weight="bold" font-size="21" fill="#f00" stroke="#f00" stroke-width="0.9">.</text></g><g transform="rotate(68.20 1635.4 248.0)"><text transform="translate(1635.4 140.0) scale(0.85 1.05)" text-anchor="middle" font-family="Liberation Sans" font-weight="bold" font-size="21" fill="#f00" stroke="#f00" stroke-width="0.9">c</text></g><g transform="rotate(81.60 1635.4 248.0)"><text transform="translate(1635.4 140.0) scale(0.85 1.05)" text-anchor="middle" font-family="Liberation Sans" font-weight="bold" font-size="21" fill="#f00" stroke="#f00" stroke-width="0.9">o</text></g><g transform="rotate(95.00 1635.4 248.0)"><text transform="translate(1635.4 140.0) scale(0.85 1.05)" text-anchor="middle" font-family="Liberation Sans" font-weight="bold" font-size="21" fill="#f00" stroke="#f00" stroke-width="0.9">m</text></g><text x="1635.4" y="379.0" transform="rotate(37.00 1635.4 248.0)" text-anchor="middle" font-family="Liberation Sans" font-style="italic" font-size="13" fill="#f00" stroke="#f00" stroke-width="0.25">h</text><text x="1635.4" y="379.0" transform="rotate(30.40 1635.4 248.0)" text-anchor="middle" font-family="Liberation Sans" font-style="italic" font-size="13" fill="#f00" stroke="#f00" stroke-width="0.25">a</text><text x="1635.4" y="379.0" transform="rotate(23.80 1635.4 248.0)" text-anchor="middle" font-family="Liberation Sans" font-style="italic" font-size="13" fill="#f00" stroke="#f00" stroke-width="0.25">i</text><text x="1635.4" y="379.0" transform="rotate(17.20 1635.4 248.0)" text-anchor="middle" font-family="Liberation Sans" font-style="italic" font-size="13" fill="#f00" stroke="#f00" stroke-width="0.25">w</text><text x="1635.4" y="379.0" transform="rotate(10.60 1635.4 248.0)" text-anchor="middle" font-family="Liberation Sans" font-style="italic" font-size="13" fill="#f00" stroke="#f00" stroke-width="0.25">a</text><text x="1635.4" y="379.0" transform="rotate(4.00 1635.4 248.0)" text-anchor="middle" font-family="Liberation Sans" font-style="italic" font-size="13" fill="#f00" stroke="#f00" stroke-width="0.25">i</text><text x="1635.4" y="379.0" transform="rotate(-2.60 1635.4 248.0)" text-anchor="middle" font-family="Liberation Sans" font-style="italic" font-size="13" fill="#f00" stroke="#f00" stroke-width="0.25">y</text><text x="1635.4" y="379.0" transform="rotate(-9.20 1635.4 248.0)" text-anchor="middle" font-family="Liberation Sans" font-style="italic" font-size="13" fill="#f00" stroke="#f00" stroke-width="0.25">m</text><text x="1635.4" y="379.0" transform="rotate(-15.80 1635.4 248.0)" text-anchor="middle" font-family="Liberation Sans" font-style="italic" font-size="13" fill="#f00" stroke="#f00" stroke-width="0.25">.</text><text x="1635.4" y="379.0" transform="rotate(-22.40 1635.4 248.0)" text-anchor="middle" font-family="Liberation Sans" font-style="italic" font-size="13" fill="#f00" stroke="#f00" stroke-width="0.25">c</text><text x="1635.4" y="379.0" transform="rotate(-29.00 1635.4 248.0)" text-anchor="middle" font-family="Liberation Sans" font-style="italic" font-size="13" fill="#f00" stroke="#f00" stroke-width="0.25">o</text><text x="1635.4" y="379.0" transform="rotate(-35.60 1635.4 248.0)" text-anchor="middle" font-family="Liberation Sans" font-style="italic" font-size="13" fill="#f00" stroke="#f00" stroke-width="0.25">m</text><text x="1637.4" y="261.5" text-anchor="middle" font-family="Liberation Serif,serif" font-size="39" fill="#f00" stroke="#f00" stroke-width="0.4" letter-spacing="2">海外源码</text><text transform="translate(1542.0 328) scale(0.8 1)" text-anchor="middle" font-family="Liberation Sans" font-weight="bold" font-size="27" fill="#f00" stroke="#f00" stroke-width="0.5">h</text><text transform="translate(1559.1 328) scale(0.8 1)" text-anchor="middle" font-family="Liberation Sans" font-weight="bold" font-size="27" fill="#f00" stroke="#f00" stroke-width="0.5">a</text><text transform="translate(1576.2 328) scale(0.8 1)" text-anchor="middle" font-family="Liberation Sans" font-weight="bold" font-size="27" fill="#f00" stroke="#f00" stroke-width="0.5">i</text><text transform="translate(1593.3 328) scale(0.8 1)" text-anchor="middle" font-family="Liberation Sans" font-weight="bold" font-size="27" fill="#f00" stroke="#f00" stroke-width="0.5">w</text><text transform="translate(1610.4 328) scale(0.8 1)" text-anchor="middle" font-family="Liberation Sans" font-weight="bold" font-size="27" fill="#f00" stroke="#f00" stroke-width="0.5">a</text><text transform="translate(1627.5 328) scale(0.8 1)" text-anchor="middle" font-family="Liberation Sans" font-weight="bold" font-size="27" fill="#f00" stroke="#f00" stroke-width="0.5">i</text><text transform="translate(1644.6 328) scale(0.8 1)" text-anchor="middle" font-family="Liberation Sans" font-weight="bold" font-size="27" fill="#f00" stroke="#f00" stroke-width="0.5">y</text><text transform="translate(1661.7 328) scale(0.8 1)" text-anchor="middle" font-family="Liberation Sans" font-weight="bold" font-size="27" fill="#f00" stroke="#f00" stroke-width="0.5">m</text><text transform="translate(1678.8 328) scale(0.8 1)" text-anchor="middle" font-family="Liberation Sans" font-weight="bold" font-size="27" fill="#f00" stroke="#f00" stroke-width="0.5">.</text><text transform="translate(1695.9 328) scale(0.8 1)" text-anchor="middle" font-family="Liberation Sans" font-weight="bold" font-size="27" fill="#f00" stroke="#f00" stroke-width="0.5">c</text><text transform="translate(1713.0 328) scale(0.8 1)" text-anchor="middle" font-family="Liberation Sans" font-weight="bold" font-size="27" fill="#f00" stroke="#f00" stroke-width="0.5">o</text><text transform="translate(1730.1 328) scale(0.8 1)" text-anchor="middle" font-family="Liberation Sans" font-weight="bold" font-size="27" fill="#f00" stroke="#f00" stroke-width="0.5">m</text></svg></body></html>
